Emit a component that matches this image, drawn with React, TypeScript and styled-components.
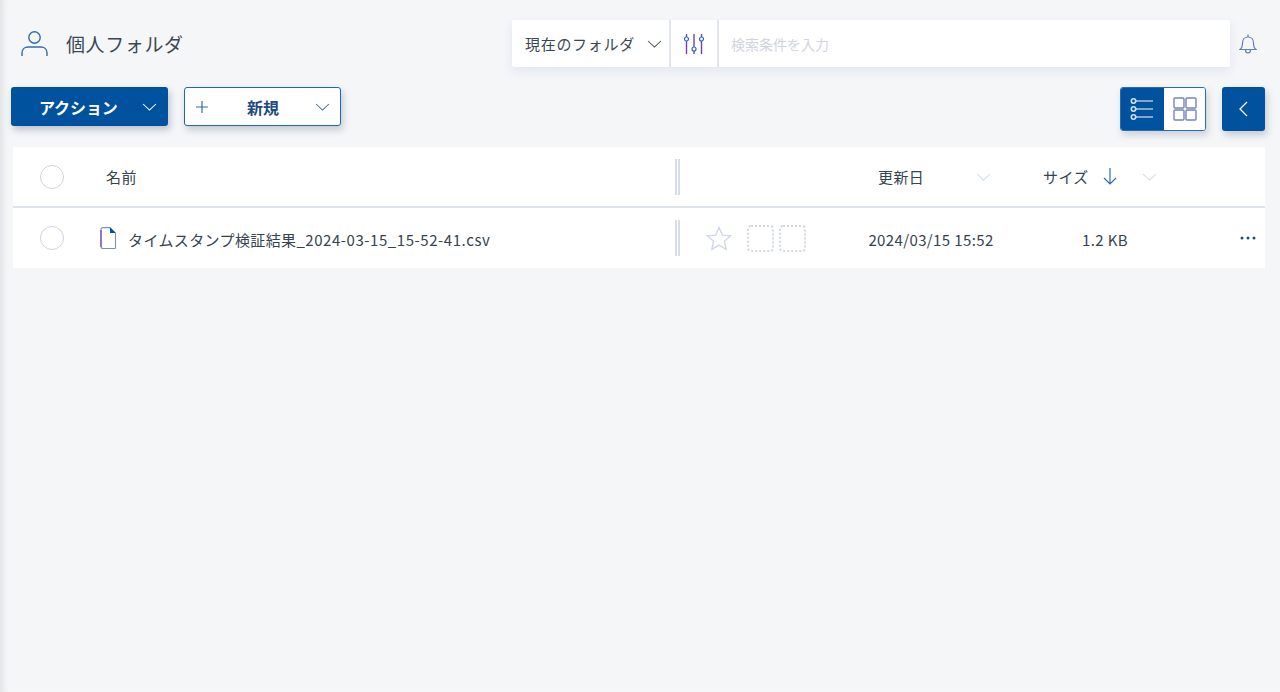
import React from "react";
import styled, { createGlobalStyle } from "styled-components";

const Global = createGlobalStyle`
  html, body { margin: 0; padding: 0; height: 100%; }
  body { background: #f4f6f8; font-family: "Noto Sans CJK JP", "Noto Sans", sans-serif; color: #33414f; }
`;

const Page = styled.div`
  width: 1280px; height: 692px; box-sizing: border-box; overflow: hidden;
  background: #f4f6f8;
  box-shadow: inset 8px 0 7px -6px rgba(110,112,115,.18);
  padding: 20px 15px 0 11px;
  display: flex; flex-direction: column;
`;
const TopBar = styled.div`
  display: flex; align-items: center; height: 47px; padding-left: 10px;
`;
const Title = styled.div`
  display: flex; align-items: center; gap: 18px; font-size: 19px; letter-spacing: .6px; color: #3b4651; flex: 1; line-height: 47px;
`;
const Search = styled.div`
  display: flex; height: 47px; width: 718px; background: #fff; border-radius: 2px;
  box-shadow: 0 4px 10px rgba(190,198,225,.35);
`;
const Scope = styled.div`
  width: 159px; box-sizing: border-box; padding: 0 7px 0 13px; display: flex; align-items: center; justify-content: space-between;
  font-size: 15px; letter-spacing: .7px; color: #3b4651; border-right: 2px solid #e2e5f0; white-space: nowrap;
`;
const FilterBtn = styled.div`
  width: 48px; box-sizing: border-box; display: flex; align-items: center; justify-content: center; border-right: 2px solid #e2e5f0;
`;
const Placeholder = styled.div`
  flex: 1; padding-left: 12px; font-size: 14px; color: #cfd4e0; display: flex; align-items: center;
`;
const Bell = styled.div`
  width: 35px; display: flex; justify-content: center;
`;
const Toolbar = styled.div`
  display: flex; align-items: flex-start; margin-top: 20px; height: 44px;
`;
const ActionButton = styled.div`
  width: 157px; height: 39px; box-sizing: border-box; background: #00519e; border-radius: 3px; color: #fff;
  font-weight: 700; font-size: 16px; letter-spacing: -.1px; display: flex; align-items: center; padding: 0 11px 0 28px; justify-content: space-between;
  box-shadow: 2px 4px 7px rgba(90,100,120,.35);
`;
const NewButton = styled.div`
  width: 157px; height: 39px; margin-left: 16px; box-sizing: border-box; background: #fff; border: 1px solid #1f66b5; border-radius: 3px;
  color: #1e4a80; font-weight: 700; font-size: 16px; display: flex; align-items: center; padding: 0 10px 0 11px;
  box-shadow: 2px 4px 7px rgba(90,100,120,.3);
`;
const NewLabel = styled.span` flex: 1; text-align: center; padding-left: 3px; `;
const Spacer = styled.div` flex: 1; `;
const Toggle = styled.div`
  display: flex; width: 86px; height: 44px; box-sizing: border-box; border: 1px solid #2a6cb0; border-radius: 3px; overflow: hidden;
  box-shadow: 2px 4px 7px rgba(90,100,120,.25);
`;
const ToggleCell = styled.div<{ $active?: boolean }>`
  flex: ${(p) => (p.$active ? "0 0 43px" : "1")};
  background: ${(p) => (p.$active ? "#00519e" : "#fff")};
  display: flex; align-items: center; justify-content: center;
`;
const Collapse = styled.div`
  width: 43px; height: 44px; margin-left: 16px; background: #00519e; border-radius: 3px; display: flex; align-items: center; justify-content: center;
  box-shadow: 2px 4px 7px rgba(90,100,120,.3);
`;
const Table = styled.div`
  margin: 16px 0 0 2px; background: #fff; height: 121px; display: flex; flex-direction: column;
`;
const Row = styled.div<{ $head?: boolean }>`
  display: flex; align-items: center; box-sizing: border-box; flex: none; height: ${(p) => (p.$head ? "61px" : "60px")};
  ${(p) => (p.$head ? "border-bottom: 2px solid #dfe3ea;" : "")}
  font-size: 15px; letter-spacing: .025em; color: #36434f; white-space: nowrap;
`;
const Check = styled.div`
  width: 24px; height: 24px; box-sizing: border-box; border: 1.5px solid #cdd3e2; border-radius: 50%; margin-left: 27px; flex: none; background: #fff;
`;
const NameCell = styled.div<{ $head?: boolean }>`
  width: 611px; flex: none; display: flex; align-items: center; gap: 12px; box-sizing: border-box;
  padding-left: ${(p) => (p.$head ? "42px" : "36px")};
`;
const FileName = styled.span` padding-top: 2px; `;
const FileTail = styled.span` letter-spacing: .55px; `;
const Divider = styled.div`
  flex: none; width: 1px; height: 36px; border-left: 2px solid #d8dcea; border-right: 2px solid #d8dcea;
`;
const Tags = styled.div` display: flex; align-items: center; margin-left: 26px; width: 150px; flex: none; `;
const Slot = styled.div`
  width: 27px; height: 27px; box-sizing: border-box; border: 2px dotted #d3d8e6; border-radius: 4px; margin-right: 5px;
  &:first-of-type { margin-left: 15px; }
`;
const DateCell = styled.div` width: 150px; flex: none; text-align: center; padding-top: 2px; `;
const SizeCell = styled.div` width: 122px; flex: none; text-align: right; padding-top: 2px; `;
const More = styled.div` margin-left: auto; margin-right: 9px; display: flex; `;
const HeadSpacer = styled.div` width: 198px; flex: none; `;
const HeadCell = styled.div<{ $w: number }>`
  width: ${(p) => p.$w}px; flex: none; display: flex; align-items: center;
`;
const HeadGap = styled.span` width: 52px; flex: none; `;

const Chev = ({ c, w = 15 }: { c: string; w?: number }) => (
  <svg width={w} height={8} viewBox="0 0 14 8" fill="none" stroke={c} strokeWidth="1" preserveAspectRatio="none"><path d="M1 1l6 6 6-6" /></svg>
);

export default function App() {
  return (
    <Page>
      <Global />
      <TopBar>
        <Title>
          <svg width="27" height="25" viewBox="0 0 27 25" fill="none" stroke="#2f6cb0" strokeWidth="1.4">
            <circle cx="13.5" cy="6.5" r="5.7" />
            <path d="M1 25v-3c0-4 3-6 6-6h13c3 0 6 2 6 6v3" />
          </svg>
          個人フォルダ
        </Title>
        <Search>
          <Scope>現在のフォルダ<Chev c="#4a5560" /></Scope>
          <FilterBtn>
            <svg width="22" height="20" viewBox="0 0 22 20" fill="none" stroke="#6f3fc0" strokeWidth="1.4">
              <path d="M3.500 0v3M3.500 7v13M11 0v13M11 17v3M18.500 0v3M18.500 7v13" />
              <circle cx="3.500" cy="5" r="2" stroke="#2f6cb0" strokeWidth="1.200" />
              <circle cx="11" cy="15" r="2" stroke="#2f6cb0" strokeWidth="1.200" />
              <circle cx="18.500" cy="5" r="2" stroke="#2f6cb0" strokeWidth="1.200" />
            </svg>
          </FilterBtn>
          <Placeholder>検索条件を入力</Placeholder>
        </Search>
        <Bell>
          <svg width="18" height="21" viewBox="0 0 18 21" fill="none" stroke="#5f7fb5" strokeWidth="1.2">
            <path d="M1 16.500c2-1.500 2.500-3 2.500-6.500 0-3.500 2.200-6 5.500-6s5.500 2.500 5.500 6c0 3.500.5 5 2.500 6.500z" />
            <path d="M9 1.500v2.500M6.500 17c0 2 1.200 3 2.500 3s2.500-1 2.500-3" />
          </svg>
        </Bell>
      </TopBar>
      <Toolbar>
        <ActionButton>アクション<Chev c="#fff" /></ActionButton>
        <NewButton>
          <svg width="12" height="12" viewBox="0 0 12 12" stroke="#2f6cb0" strokeWidth="1.2"><path d="M6 0v12M0 6h12" /></svg>
          <NewLabel>新規</NewLabel>
          <Chev c="#4f6f96" />
        </NewButton>
        <Spacer />
        <Toggle>
          <ToggleCell $active>
            <svg width="24" height="22" viewBox="0 0 24 22" fill="none" stroke="#fff" strokeWidth="1.2" style={{ marginLeft: -2 }}>
              <circle cx="3.500" cy="3" r="2.200" strokeWidth="1.600" stroke="#cfe2f7" /><circle cx="3.500" cy="11" r="2.200" strokeWidth="1.600" stroke="#cfe2f7" /><circle cx="3.500" cy="19" r="2.200" strokeWidth="1.600" stroke="#cfe2f7" />
              <path d="M6 3h17M6 11h17M6 19h17" />
            </svg>
          </ToggleCell>
          <ToggleCell>
            <svg width="24" height="24" viewBox="0 0 24 24" fill="none" stroke="#7484bb" strokeWidth="1.400">
              <rect x="1" y="1" width="10" height="10" rx="1" /><rect x="13" y="1" width="10" height="10" rx="1" />
              <rect x="1" y="13" width="10" height="10" rx="1" /><rect x="13" y="13" width="10" height="10" rx="1" />
            </svg>
          </ToggleCell>
        </Toggle>
        <Collapse>
          <svg width="9" height="16" viewBox="0 0 9 16" fill="none" stroke="#fff" strokeWidth="1.300"><path d="M8 1L1 8l7 7" /></svg>
        </Collapse>
      </Toolbar>
      <Table>
        <Row $head>
          <Check />
          <NameCell $head>名前</NameCell>
          <Divider />
          <HeadSpacer />
          <HeadCell $w={165}>更新日<HeadGap /><Chev c="#ccdbe8" /></HeadCell>
          <HeadCell $w={60}>サイズ</HeadCell>
          <HeadCell $w={39}>
            <svg width="14" height="17" viewBox="0 0 14 17" fill="none" stroke="#2f6cb0" strokeWidth="1.200"><path d="M7 0v16M1 10l6 6 6-6" /></svg>
          </HeadCell>
          <Chev c="#ccdbe8" />
        </Row>
        <Row>
          <Check />
          <NameCell>
            <svg width="16" height="22" viewBox="0 0 16 22" fill="none">
              <path d="M10 .6H3a2 2 0 0 0-2 2v17a2 2 0 0 0 2 2h11.500a1 1 0 0 0 1-1V6" stroke="#7a8fc0" strokeWidth="1.100" />
              <path d="M1 3v17" stroke="#7a45b5" strokeWidth="1.200" />
              <path d="M10 0L16 6H10z" fill="#00519e" />
            </svg>
            <FileName>タイムスタンプ検証結果<FileTail>_2024-03-15_15-52-41.csv</FileTail></FileName>
          </NameCell>
          <Divider />
          <Tags>
            <svg width="26" height="25" viewBox="0 0 26 25" fill="none" stroke="#cfd6e6" strokeWidth="1.400">
              <path d="M13 1.500l3.400 7.600 8.100.8-6.100 5.400 1.800 8-7.200-4.200-7.200 4.200 1.800-8-6.100-5.400 8.100-.8z" />
            </svg>
            <Slot />
            <Slot />
          </Tags>
          <DateCell>2024/03/15 15:52</DateCell>
          <SizeCell>1.2 KB</SizeCell>
          <More>
            <svg width="16" height="4" viewBox="0 0 16 4" fill="#1e4a80"><circle cx="2" cy="2" r="1.500" /><circle cx="8" cy="2" r="1.500" /><circle cx="14" cy="2" r="1.500" /></svg>
          </More>
        </Row>
      </Table>
    </Page>
  );
}
